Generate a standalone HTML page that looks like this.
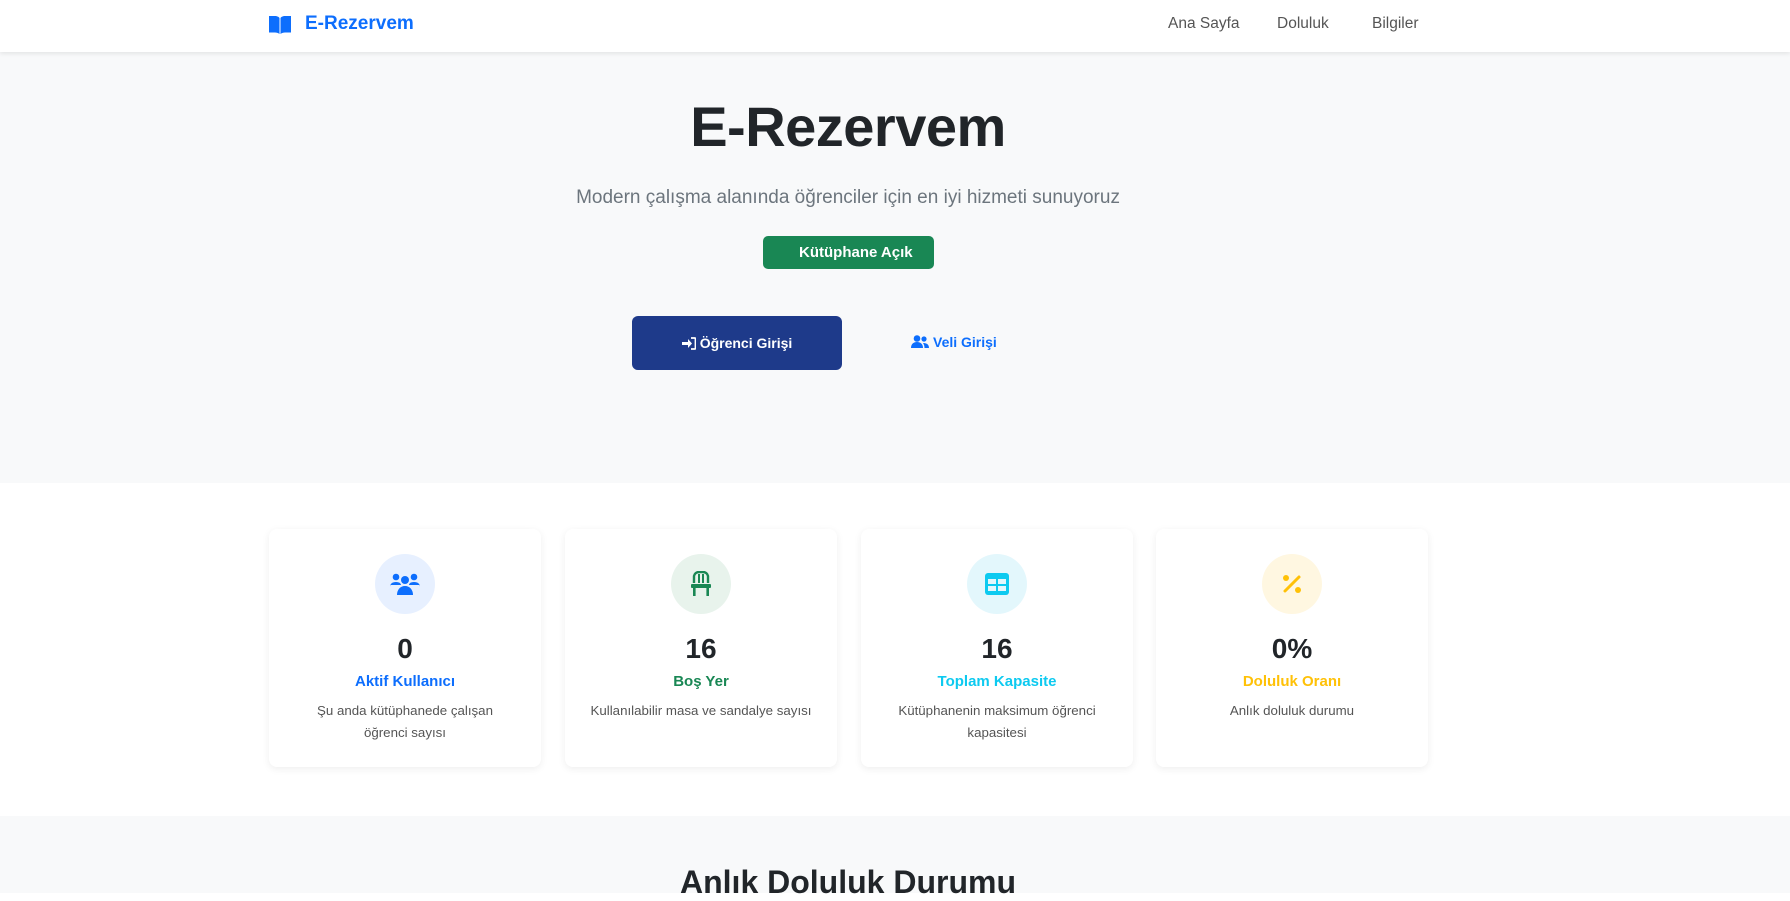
<!DOCTYPE html>
<html><head><meta charset="utf-8">
<style>
*{margin:0;padding:0;box-sizing:border-box}
html,body{width:1790px;height:893px;overflow:hidden;background:#fff;font-family:"Liberation Sans",sans-serif;color:#212529}
.abs{position:absolute}
nav{position:absolute;left:0;top:0;width:1790px;height:52px;background:#fff;box-shadow:0 2px 4px rgba(0,0,0,.08);z-index:2}
.hero{position:absolute;left:0;top:52px;width:1790px;height:431px;background:#f8f9fa}
.bottom{position:absolute;left:0;top:816px;width:1790px;height:77px;background:#f8f9fa}
.card{position:absolute;top:529px;width:272px;height:238px;background:#fff;border-radius:8px;box-shadow:0 2px 8px rgba(0,0,0,.07);text-align:center}
.circ{position:absolute;left:106px;top:25px;width:60px;height:60px;border-radius:50%;display:flex;align-items:center;justify-content:center}
.num{position:absolute;left:0;width:100%;top:104px;font-size:28px;font-weight:bold;color:#212529}
.lab{position:absolute;left:0;width:100%;top:144px;font-size:15px;font-weight:bold}
.desc{position:absolute;left:36px;width:200px;top:171px;font-size:13.3px;line-height:22px;color:#555}
</style></head><body>
<nav>
 <svg class="abs" style="left:268px;top:15px" width="24" height="20" viewBox="0 0 24 20"><path d="M1 1h6c2 0 4 1 4.5 2v16c-1-1-3-1.5-4.5-1.5H1z M23 1h-6c-2 0-4 1-4.5 2v16c1-1 3-1.5 4.5-1.5H23z" fill="#0d6efd"/></svg>
 <div class="abs" style="left:305px;top:13px;font-size:19px;font-weight:bold;color:#0d6efd">E-Rezervem</div>
 <div class="abs" style="left:1168px;top:15px;font-size:15.5px;color:#555">Ana Sayfa</div>
 <div class="abs" style="left:1277px;top:15px;font-size:15.5px;color:#555">Doluluk</div>
 <div class="abs" style="left:1372px;top:15px;font-size:15.5px;color:#555">Bilgiler</div>
</nav>
<div class="hero"></div>
<div class="abs" style="left:0;width:1696px;top:94px;text-align:center;font-size:56px;font-weight:bold;color:#212529;letter-spacing:-0.5px">E-Rezervem</div>
<div class="abs" style="left:0;width:1696px;top:187px;text-align:center;font-size:19px;color:#6c757d">Modern çalışma alanında öğrenciler için en iyi hizmeti sunuyoruz</div>
<div class="abs" style="left:763px;top:236px;width:171px;height:33px;background:#198754;border-radius:5px;color:#fff;font-size:15px;font-weight:bold;line-height:33px;padding-left:36px">Kütüphane Açık</div>
<div class="abs" style="left:632px;top:316px;width:210px;height:54px;background:#1e3a8a;border-radius:6px;color:#fff;font-size:14px;font-weight:bold;line-height:54px;text-align:center">
 <svg style="vertical-align:-2px;margin-right:4px" width="14" height="13" viewBox="0 0 14 13"><path d="M0 5h6V2l4 4.5-4 4.5V8H0z" fill="#fff"/><path d="M9 1h3.5a1 1 0 0 1 1 1v9a1 1 0 0 1-1 1H9" fill="none" stroke="#fff" stroke-width="1.8"/></svg>Öğrenci Girişi</div>
<div class="abs" style="left:911px;top:334px;font-size:14px;font-weight:bold;color:#0d6efd">
 <svg style="vertical-align:-2px;margin-right:4px" width="18" height="14" viewBox="0 0 18 14"><circle cx="6" cy="3.5" r="3.3" fill="#0d6efd"/><path d="M0 13c0-4 2.5-6 6-6s6 2 6 6z" fill="#0d6efd"/><circle cx="13" cy="4" r="2.6" fill="#0d6efd"/><path d="M12 8c3 0 6 1 6 5h-4.5c0-2-0.5-3.5-1.5-5z" fill="#0d6efd"/></svg>Veli Girişi</div>

<div class="card" style="left:269px"><div class="circ" style="background:#e7f0ff">
 <svg width="30" height="22" viewBox="0 0 30 22"><circle cx="6" cy="4" r="3.3" fill="#0d6efd"/><circle cx="24" cy="4" r="3.3" fill="#0d6efd"/><circle cx="15" cy="7" r="4" fill="#0d6efd"/><path d="M0 14c0-3 2-5 6-5s5 2 5 3H0z M30 14c0-3-2-5-6-5s-5 2-5 3h11z" fill="#0d6efd"/><path d="M7 22c0-5 3-9 8-9s8 4 8 9z" fill="#0d6efd"/></svg></div>
 <div class="num">0</div><div class="lab" style="color:#0d6efd">Aktif Kullanıcı</div><div class="desc">Şu anda kütüphanede çalışan öğrenci sayısı</div></div>
<div class="card" style="left:565px"><div class="circ" style="background:#e8f3ec">
 <svg width="22" height="26" viewBox="0 0 22 26"><path d="M4 12V5a5 5 0 0 1 5-4h4a5 5 0 0 1 5 4v7" fill="none" stroke="#198754" stroke-width="2.4"/><path d="M9 3v9M13 3v9" stroke="#198754" stroke-width="2"/><rect x="1" y="13" width="20" height="4" rx="1" fill="#198754"/><rect x="3" y="17" width="2.6" height="8" fill="#198754"/><rect x="16.4" y="17" width="2.6" height="8" fill="#198754"/></svg></div>
 <div class="num">16</div><div class="lab" style="color:#198754">Boş Yer</div><div class="desc" style="left:16px;width:240px">Kullanılabilir masa ve sandalye sayısı</div></div>
<div class="card" style="left:861px"><div class="circ" style="background:#e3f7fc">
 <svg width="24" height="22" viewBox="0 0 24 22"><rect width="24" height="22" rx="3" fill="#0dcaf0"/><rect x="3" y="6" width="8" height="5" fill="#e3f7fc"/><rect x="13" y="6" width="8" height="5" fill="#e3f7fc"/><rect x="3" y="13" width="8" height="5" fill="#e3f7fc"/><rect x="13" y="13" width="8" height="5" fill="#e3f7fc"/></svg></div>
 <div class="num">16</div><div class="lab" style="color:#0dcaf0">Toplam Kapasite</div><div class="desc">Kütüphanenin maksimum öğrenci kapasitesi</div></div>
<div class="card" style="left:1156px"><div class="circ" style="background:#fff7e1">
 <svg width="20" height="20" viewBox="0 0 20 20"><circle cx="4" cy="4" r="3" fill="#ffc107"/><circle cx="16" cy="16" r="3" fill="#ffc107"/><path d="M17 3L3 17" stroke="#ffc107" stroke-width="3" stroke-linecap="round"/></svg></div>
 <div class="num">0%</div><div class="lab" style="color:#ffc107">Doluluk Oranı</div><div class="desc">Anlık doluluk durumu</div></div>

<div class="bottom"></div>
<div class="abs" style="left:0;width:1696px;top:864px;text-align:center;font-size:32px;font-weight:bold;color:#212529">Anlık Doluluk Durumu</div>
</body></html>
